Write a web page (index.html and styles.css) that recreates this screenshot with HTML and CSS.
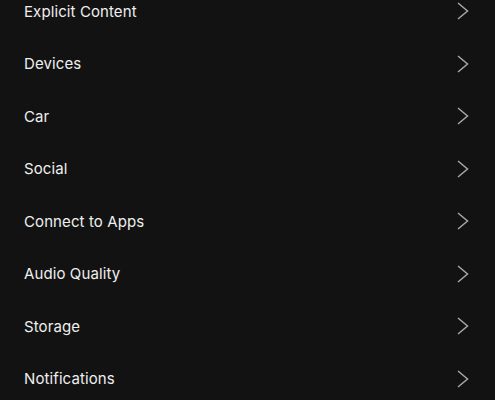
FILE: index.html
```html
<!DOCTYPE html>
<html lang="en">
<head>
    <meta charset="UTF-8">
    <meta name="viewport" content="width=device-width, initial-scale=1.0">
    <title>Settings</title>
    <link rel="stylesheet" href="styles.css">
</head>
<body>
    <ul class="settings-list">
        <li class="settings-row"><span class="label">Explicit Content</span><svg class="chevron" viewBox="0 0 12 18"><path d="M1 1l9.5 8L1 17"/></svg></li>
        <li class="settings-row"><span class="label">Devices</span><svg class="chevron" viewBox="0 0 12 18"><path d="M1 1l9.5 8L1 17"/></svg></li>
        <li class="settings-row"><span class="label">Car</span><svg class="chevron" viewBox="0 0 12 18"><path d="M1 1l9.5 8L1 17"/></svg></li>
        <li class="settings-row"><span class="label">Social</span><svg class="chevron" viewBox="0 0 12 18"><path d="M1 1l9.5 8L1 17"/></svg></li>
        <li class="settings-row"><span class="label">Connect to Apps</span><svg class="chevron" viewBox="0 0 12 18"><path d="M1 1l9.5 8L1 17"/></svg></li>
        <li class="settings-row"><span class="label">Audio Quality</span><svg class="chevron" viewBox="0 0 12 18"><path d="M1 1l9.5 8L1 17"/></svg></li>
        <li class="settings-row"><span class="label">Storage</span><svg class="chevron" viewBox="0 0 12 18"><path d="M1 1l9.5 8L1 17"/></svg></li>
        <li class="settings-row"><span class="label">Notifications</span><svg class="chevron" viewBox="0 0 12 18"><path d="M1 1l9.5 8L1 17"/></svg></li>
    </ul>
</body>
</html>
```

FILE: styles.css
```css
html, body {
    margin: 0;
    padding: 0;
    background-color: #121212;
    overflow: hidden;
}

body {
    font-family: Inter, "Liberation Sans", sans-serif;
    color: #efefef;
}

.settings-list {
    list-style: none;
    margin: -15px 0 0 0;
    padding: 0;
}

.settings-row {
    display: flex;
    align-items: center;
    justify-content: space-between;
    height: 52.5px;
    padding: 0 26px 0 24px;
}

.label {
    font-size: 15px;
    letter-spacing: 0.1px;
}

.chevron {
    width: 12px;
    height: 18px;
    fill: none;
    stroke: #a7a7a7;
    stroke-width: 1.5;
}
```
